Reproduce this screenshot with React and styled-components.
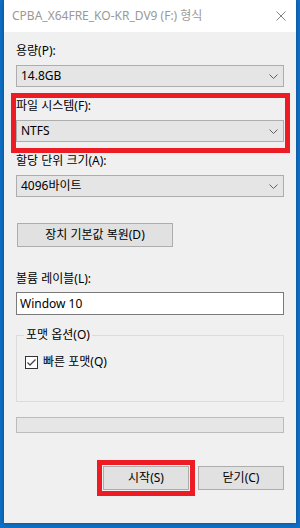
import React from 'react';
import styled, { createGlobalStyle, css } from 'styled-components';

const GlobalStyle = createGlobalStyle`
  html, body {
    margin: 0;
    padding: 0;
    background: #0f6fc6;
  }
  * {
    box-sizing: border-box;
  }
`;

const Desktop = styled.div`
  width: 300px;
  height: 528px;
  background: #0f6fc6;
  padding: 0 4px 5px 4px;
  font-family: "Noto Sans", "Noto Sans CJK KR", sans-serif;
  font-size: 12px;
  color: #000;
`;

const Window = styled.div`
  width: 292px;
  height: 523px;
  background: #f0f0f0;
  display: flex;
  flex-direction: column;
  box-shadow: 0 0 4px rgba(0, 0, 0, 0.35);
`;

const TitleBar = styled.div`
  height: 32px;
  background: #fff;
  display: flex;
  align-items: center;
  justify-content: space-between;
  padding: 0 10px 0 8px;
  flex-shrink: 0;
`;

const Title = styled.span`
  color: #999;
  font-size: 12px;
  line-height: 16px;
  white-space: nowrap;
`;

const Body = styled.div`
  padding: 10px 12px 0 12px;
  display: flex;
  flex-direction: column;
`;

const Field = styled.div`
  position: relative;
  display: flex;
  flex-direction: column;
  gap: ${(p) => p.$gap ?? 5}px;
  margin-top: ${(p) => p.$mt ?? 0}px;

  ${(p) =>
    p.$highlight &&
    css`
      &::after {
        content: '';
        position: absolute;
        top: -4px;
        left: -5px;
        right: -6px;
        bottom: -11px;
        border: 5px solid #ed1c24;
        pointer-events: none;
      }
    `}
`;

const Label = styled.label`
  line-height: 18px;
  height: 18px;
  white-space: nowrap;
`;

const Combo = styled.div`
  height: 22px;
  border: 1px solid #adadad;
  background: #e5e5e5;
  display: flex;
  align-items: center;
  justify-content: space-between;
  padding: 0 5px 0 4px;
  line-height: 16px;
`;

const Chevron = () => (
  <svg width="9" height="5" viewBox="0 0 9 5">
    <polyline points="0.5,0.5 4.5,4.5 8.5,0.5" fill="none" stroke="#606060" strokeWidth="1" />
  </svg>
);

const CloseIcon = () => (
  <svg width="10" height="10" viewBox="0 0 10 10">
    <path d="M0.5 0.5 L9.5 9.5 M9.5 0.5 L0.5 9.5" stroke="#808080" strokeWidth="1" />
  </svg>
);

const Button = styled.button`
  font: inherit;
  color: #000;
  height: 24px;
  width: ${(p) => p.$w}px;
  margin: 0;
  padding: 0;
  border: 1px solid #adadad;
  background: #e1e1e1;
  line-height: 16px;
  ${(p) =>
    p.$highlight &&
    css`
      outline: 5px solid #ed1c24;
      outline-offset: 1px;
    `}
`;

const ResetButton = styled(Button)`
  margin-top: 26px;
  margin-left: 1px;
  align-self: flex-start;
`;

const TextBox = styled.div`
  height: 23px;
  border: 1px solid #7a7a7a;
  background: #fff;
  padding: 0 3px;
  display: flex;
  align-items: center;
  line-height: 16px;
`;

const GroupBox = styled.fieldset`
  margin: 12px 0 0 0;
  min-width: 0;
  border: 1px solid #dcdcdc;
  padding: 11px 8px 31px 8px;
`;

const Legend = styled.legend`
  padding: 0 2px;
  margin-left: -1px;
  line-height: 16px;
`;

const CheckRow = styled.div`
  display: flex;
  align-items: center;
  gap: 5px;
  height: 16px;
  line-height: 16px;
`;

const CheckBox = styled.span`
  width: 13px;
  height: 13px;
  border: 1px solid #333;
  background: #fff;
  display: flex;
  align-items: center;
  justify-content: center;
`;

const Progress = styled.div`
  margin-top: 15px;
  height: 16px;
  border: 1px solid #bcbcbc;
  background: #e6e6e6;
`;

const ButtonRow = styled.div`
  margin-top: 33px;
  display: flex;
  justify-content: flex-end;
  gap: 9px;
`;

const ComboField = ({ label, value, mt, highlight }) => (
  <Field $mt={mt} $highlight={highlight}>
    <Label>{label}</Label>
    <Combo>
      <span>{value}</span>
      <Chevron />
    </Combo>
  </Field>
);

export default function App() {
  return (
    <>
      <GlobalStyle />
      <Desktop>
        <Window>
          <TitleBar>
            <Title>CPBA_X64FRE_KO-KR_DV9 (F:) 형식</Title>
            <CloseIcon />
          </TitleBar>
          <Body>
            <ComboField label="용량(P):" value="14.8GB" />
            <ComboField label="파일 시스템(F):" value="NTFS" mt={10} highlight />
            <ComboField label="할당 단위 크기(A):" value="4096바이트" mt={10} />
            <ResetButton $w={156}>장치 기본값 복원(D)</ResetButton>
            <Field $mt={23} $gap={4}>
              <Label>볼륨 레이블(L):</Label>
              <TextBox>Window 10</TextBox>
            </Field>
            <GroupBox>
              <Legend>포맷 옵션(O)</Legend>
              <CheckRow>
                <CheckBox>
                  <svg width="11" height="11" viewBox="0 0 11 11">
                    <polyline points="1.5,5.5 4,8 9.5,2.5" fill="none" stroke="#444" strokeWidth="1.3" />
                  </svg>
                </CheckBox>
                <span>빠른 포맷(Q)</span>
              </CheckRow>
            </GroupBox>
            <Progress />
            <ButtonRow>
              <Button $w={86} $highlight>시작(S)</Button>
              <Button $w={86}>닫기(C)</Button>
            </ButtonRow>
          </Body>
        </Window>
      </Desktop>
    </>
  );
}
